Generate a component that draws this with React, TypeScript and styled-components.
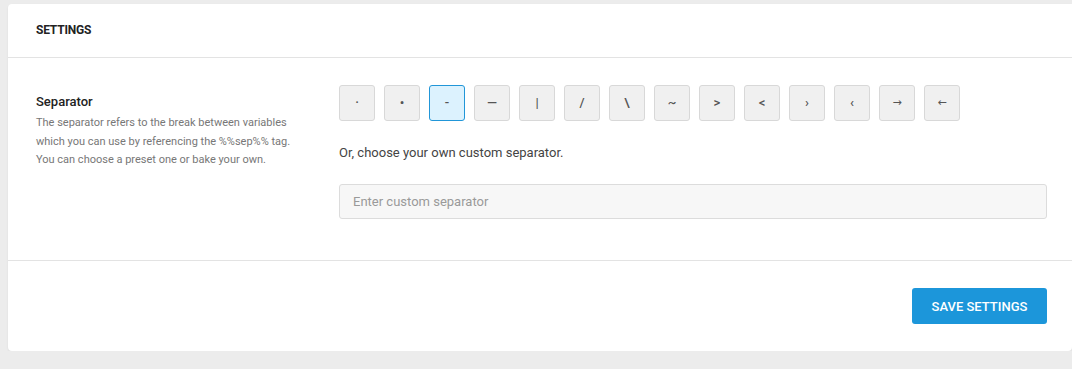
import React, { useState } from "react";
import styled, { createGlobalStyle } from "styled-components";

const GlobalStyle = createGlobalStyle`
  html, body {
    margin: 0;
    padding: 0;
    background: #ececec;
    font-family: Roboto, "Liberation Sans", Arial, sans-serif;
  }
`;

const SEPARATORS = ["·", "•", "-", "—", "|", "/", "\\", "~", ">", "<", "›", "‹", "→", "←"];
const WIDE = ["→", "←"];

const Page = () => {
  const [active, setActive] = useState("-");
  const [custom, setCustom] = useState("");

  return (
    <>
      <GlobalStyle />
      <Card>
        <Header>
          <Title>Settings</Title>
        </Header>
        <Body>
          <Info>
            <Label>Separator</Label>
            <Description>
              The separator refers to the break between variables which you can
              use by referencing the %%sep%% tag. You can choose a preset one or
              bake your own.
            </Description>
          </Info>
          <Controls>
            <SepList>
              {SEPARATORS.map((s) => (
                <SepButton
                  key={s}
                  type="button"
                  $active={s === active}
                  $wide={WIDE.includes(s)}
                  onClick={() => setActive(s)}
                >
                  {s}
                </SepButton>
              ))}
            </SepList>
            <Hint>Or, choose your own custom separator.</Hint>
            <CustomInput
              type="text"
              placeholder="Enter custom separator"
              value={custom}
              onChange={(e) => setCustom(e.target.value)}
            />
          </Controls>
        </Body>
        <Footer>
          <SaveButton type="button">Save Settings</SaveButton>
        </Footer>
      </Card>
    </>
  );
};

const Card = styled.div`
  margin: 4px 0 0 8px;
  background: #fff;
  border-radius: 4px 0 4px 4px;
  box-shadow: 0 1px 2px rgba(0, 0, 0, 0.08);
  height: 347px;
  display: flex;
  flex-direction: column;
`;

const Header = styled.div`
  height: 53px;
  border-bottom: 1px solid #e3e3e3;
  display: flex;
  align-items: center;
  padding: 0 28px;
`;

const Title = styled.h2`
  margin: 0;
  font-size: 12px;
  font-weight: 700;
  text-transform: uppercase;
  color: #222;
  letter-spacing: -0.2px;
  position: relative;
  top: -1px;
`;

const Body = styled.div`
  display: grid;
  grid-template-columns: 303px 1fr;
  padding: 27px 25px 41px 28px;
  border-bottom: 1px solid #e3e3e3;
`;

const Info = styled.div`
  padding-top: 9px;
`;

const Label = styled.h3`
  margin: 0 0 5px;
  font-size: 13px;
  font-weight: 500;
  color: #222;
`;

const Description = styled.p`
  margin: 0;
  width: 265px;
  font-size: 11px;
  line-height: 18.5px;
  color: #777;
`;

const Controls = styled.div`
  display: flex;
  flex-direction: column;
`;

const SepList = styled.div`
  display: flex;
  gap: 9px;
`;

const SepButton = styled.button<{ $active: boolean; $wide: boolean }>`
  width: 36px;
  height: 36px;
  padding: 0 0 2px;
  border-radius: 3px;
  border: 1px solid ${(p) => (p.$active ? "#2196d8" : "#d8d8d8")};
  background: ${(p) => (p.$active ? "#dcf2fe" : "#f0f0f0")};
  color: #555;
  font-family: ${(p) => (p.$wide ? '"DejaVu Sans", sans-serif' : "Roboto, sans-serif")};
  font-size: ${(p) => (p.$wide ? "11px" : "13px")};
  font-weight: 500;
  cursor: pointer;
`;

const Hint = styled.p`
  margin: 24px 0 24px;
  font-size: 13px;
  color: #444;
`;

const CustomInput = styled.input`
  height: 35px;
  box-sizing: border-box;
  width: 100%;
  padding: 0 13px;
  border: 1px solid #dcdcdc;
  border-radius: 3px;
  background: #f7f7f7;
  font-family: inherit;
  font-size: 13px;
  color: #333;
  outline: none;
  &::placeholder {
    color: #9a9a9a;
  }
`;

const Footer = styled.div`
  display: flex;
  justify-content: flex-end;
  padding: 27px 25px 0;
`;

const SaveButton = styled.button`
  width: 135px;
  height: 36px;
  border: none;
  border-radius: 3px;
  background: #1c96da;
  color: #fff;
  font-family: inherit;
  font-size: 13px;
  font-weight: 500;
  text-transform: uppercase;
  cursor: pointer;
`;

export default Page;
